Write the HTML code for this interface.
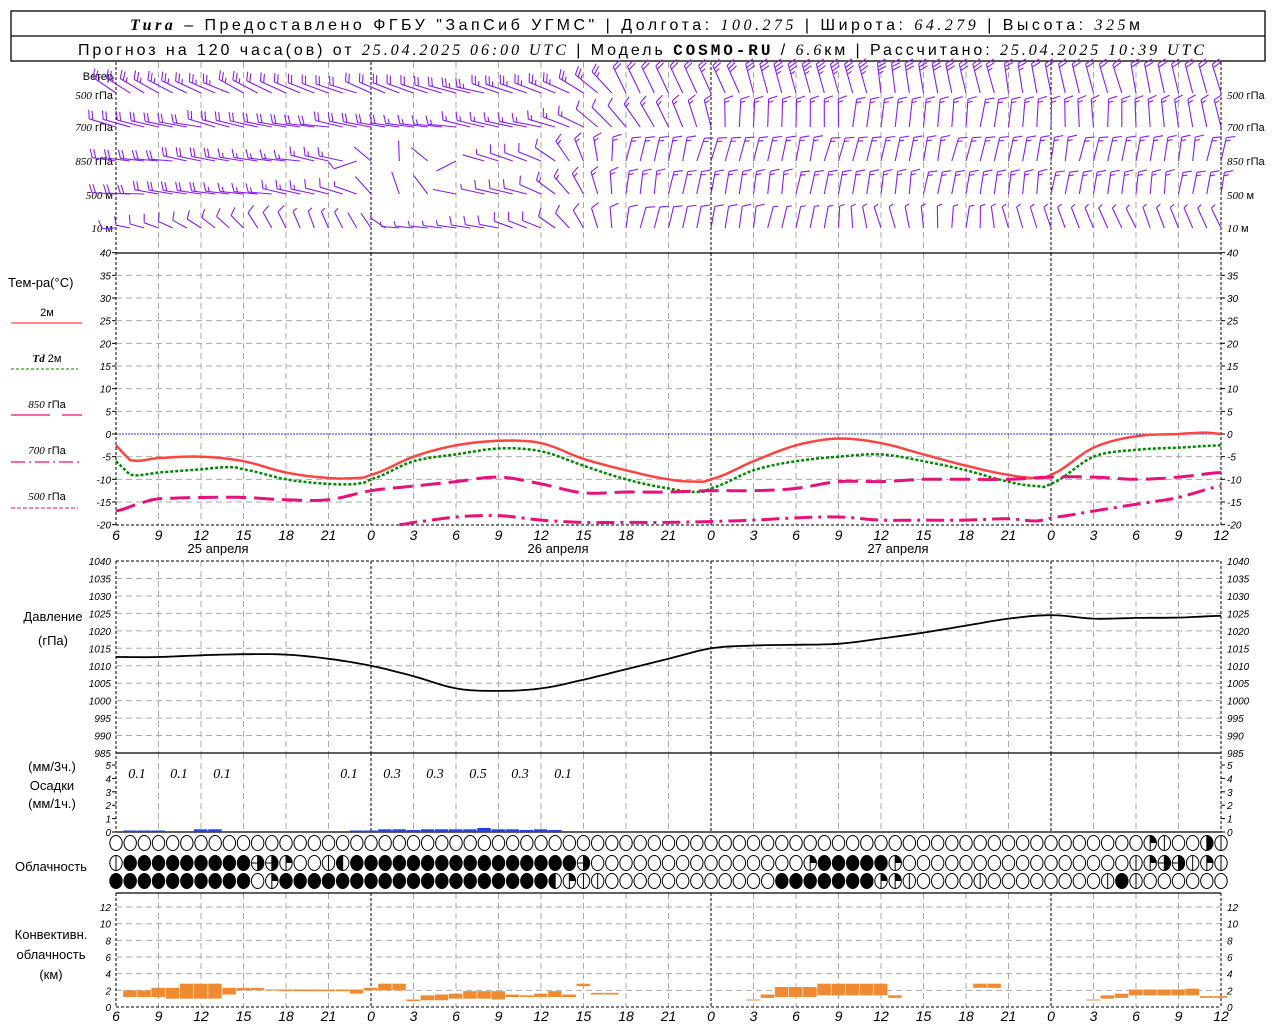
<!DOCTYPE html>
<html><head><meta charset="utf-8"><style>
html,body{margin:0;padding:0;background:#fff;width:1280px;height:1024px;overflow:hidden}
svg{display:block}
.t{font-family:"Liberation Sans","DejaVu Sans",sans-serif;fill:#000}
.i{font-family:"Liberation Serif","DejaVu Serif",serif;font-style:italic;fill:#000}
.ax{font-family:"Liberation Sans",sans-serif;font-style:italic;font-size:10px;fill:#000}
</style></head><body>
<svg id="s" width="1280" height="1024" viewBox="0 0 1280 1024" xmlns="http://www.w3.org/2000/svg">
<rect x="11" y="11" width="1254" height="50" fill="none" stroke="#000" stroke-width="1.3"/>
<line x1="11" y1="36" x2="1265" y2="36" stroke="#000" stroke-width="1.3"/>
<text x="130" y="30" class="t" font-size="16" textLength="1010" lengthAdjust="spacing"><tspan class="i" font-weight="bold">Tura</tspan> – Предоставлено ФГБУ "ЗапСиб УГМС" | Долгота: <tspan class="i">100.275</tspan> | Широта: <tspan class="i">64.279</tspan> | Высота: <tspan class="i">325</tspan>м</text>
<text x="78" y="55" class="t" font-size="16" textLength="1126" lengthAdjust="spacing">Прогноз на 120 часа(ов) от <tspan class="i">25.04.2025 06:00 UTC</tspan>  | Модель <tspan font-family="Liberation Mono" font-weight="bold">COSMO-RU</tspan> / <tspan class="i">6.6</tspan>км | Рассчитано: <tspan class="i">25.04.2025 10:39 UTC</tspan></text>

<g class="t" font-size="11">
<text x="113" y="80" text-anchor="end">Ветер</text>
<text x="113" y="99" text-anchor="end"><tspan class="i">500</tspan> гПа</text>
<text x="113" y="131" text-anchor="end"><tspan class="i">700</tspan> гПа</text>
<text x="113" y="165" text-anchor="end"><tspan class="i">850</tspan> гПа</text>
<text x="113" y="199" text-anchor="end"><tspan class="i">500</tspan> м</text>
<text x="113" y="232" text-anchor="end"><tspan class="i">10</tspan>   м</text>
<text x="1227" y="99"><tspan class="i">500</tspan> гПа</text>
<text x="1227" y="131"><tspan class="i">700</tspan> гПа</text>
<text x="1227" y="165"><tspan class="i">850</tspan> гПа</text>
<text x="1227" y="199"><tspan class="i">500</tspan> м</text>
<text x="1227" y="232"><tspan class="i">10</tspan>   м</text>
</g>
<g class="t" font-size="13">
<text x="8" y="287">Тем-ра(°С)</text>
<text x="47" y="316" text-anchor="middle" font-size="11">2м</text>
<text x="47" y="362" text-anchor="middle" font-size="11"><tspan class="i" font-weight="bold">Td</tspan>  2м</text>
<text x="47" y="408" text-anchor="middle" font-size="11"><tspan class="i">850</tspan> гПа</text>
<text x="47" y="454" text-anchor="middle" font-size="11"><tspan class="i">700</tspan> гПа</text>
<text x="47" y="500" text-anchor="middle" font-size="11"><tspan class="i">500</tspan> гПа</text>
<text x="53" y="621" text-anchor="middle">Давление</text>
<text x="53" y="645" text-anchor="middle">(гПа)</text>
<text x="52" y="771" text-anchor="middle">(мм/3ч.)</text>
<text x="52" y="790" text-anchor="middle">Осадки</text>
<text x="52" y="808" text-anchor="middle">(мм/1ч.)</text>
<text x="51" y="871" text-anchor="middle">Облачность</text>
<text x="51" y="939" text-anchor="middle">Конвективн.</text>
<text x="51" y="959" text-anchor="middle">облачность</text>
<text x="51" y="979" text-anchor="middle">(км)</text>
<text x="218" y="553" text-anchor="middle">25 апреля</text>
<text x="558" y="553" text-anchor="middle">26 апреля</text>
<text x="898" y="553" text-anchor="middle">27 апреля</text>
</g>
<line x1="11" y1="323" x2="82" y2="323" stroke="#f44" stroke-width="1.2"/>
<line x1="11" y1="369" x2="78" y2="369" stroke="#080" stroke-width="1" stroke-dasharray="3,2"/>
<line x1="11" y1="415" x2="50" y2="415" stroke="#e8107a" stroke-width="1.2"/>
<line x1="62" y1="415" x2="82" y2="415" stroke="#e8107a" stroke-width="1.2"/>
<line x1="11" y1="462" x2="82" y2="462" stroke="#e8107a" stroke-width="1.2" stroke-dasharray="14,4,2,4"/>
<line x1="11" y1="508" x2="78" y2="508" stroke="#e8107a" stroke-width="1" stroke-dasharray="4,2"/>
<g class="i" font-size="14">
<text x="137" y="778" text-anchor="middle">0.1</text><text x="179" y="778" text-anchor="middle">0.1</text><text x="222" y="778" text-anchor="middle">0.1</text>
<text x="349" y="778" text-anchor="middle">0.1</text><text x="392" y="778" text-anchor="middle">0.3</text><text x="435" y="778" text-anchor="middle">0.3</text>
<text x="478" y="778" text-anchor="middle">0.5</text><text x="520" y="778" text-anchor="middle">0.3</text><text x="563" y="778" text-anchor="middle">0.1</text>
</g>
<g id="ax" class="ax"></g>
<g id="g"></g>
</svg>
<script>
var NS="http://www.w3.org/2000/svg",G=document.getElementById('g'),AX=document.getElementById('ax');
function el(t,a,p){var e=document.createElementNS(NS,t);for(var k in a)e.setAttribute(k,a[k]);(p||G).appendChild(e);return e;}
function X(h){return 116+h*14.1667;}
function ln(x1,y1,x2,y2,c,w,d){var a={x1:x1,y1:y1,x2:x2,y2:y2,stroke:c,'stroke-width':w||1};if(d)a['stroke-dasharray']=d;return el('line',a);}
function txt(x,y,s,anc,cls,fs){var t=el('text',{x:x,y:y,'text-anchor':anc||'start'},AX);if(cls)t.setAttribute('class',cls);if(fs)t.setAttribute('style','font-size:'+fs+'px');t.textContent=s;}
var panels=[[62,253],[253,525],[561,753],[753,832],[893,1007]];
panels.forEach(function(p){for(var h=3;h<78;h+=3){var day=((6+h)%24)==0;ln(X(h),p[0],X(h),p[1],day?'#000':'#aaa',1,day?'3,2':'6,4');}});
for(var v=-20;v<=40;v+=5){var y=434-v*4.533;if(v>-20&&v<40&&v!=0)ln(116,y,1221,y,'#aaa',1,'6,4');txt(111,y+4,String(v),'end');txt(1227,y+4,String(v));ln(112,y,116,y,'#000');ln(1221,y,1225,y,'#000');}
ln(116,434,1221,434,'#33f',1,'2,1');
ln(116,253,1221,253,'#000',1.3);ln(116,525,1221,525,'#000',1,'3,2');
for(var p=985;p<=1040;p+=5){var y=753-(p-985)*3.49;if(p>985)ln(116,y,1221,y,p==1040?'#000':'#aaa',1,p==1040?'3,2':'6,4');txt(111,y+4,String(p),'end');txt(1227,y+4,String(p));}
ln(116,753,1221,753,'#000',1.3);
for(var k=0;k<=5;k++){var y=832-k*13.4;txt(111,y+4,String(k),'end');txt(1227,y+4,String(k));ln(112,y,116,y,'#000');ln(1221,y,1225,y,'#000');}
ln(116,832,1221,832,'#000',1.3);
for(var k=0;k<=12;k+=2){var y=1007-k*8.33;if(k>0)ln(116,y,1221,y,'#aaa',1,'6,4');txt(111,y+4,String(k),'end');txt(1227,y+4,String(k));}
ln(116,893,1221,893,'#000',1.3);ln(116,1007,1221,1007,'#000',1,'3,2');
[[62,525],[561,832],[893,1007]].forEach(function(p){ln(116,p[0],116,p[1],'#000',1,'3,2');ln(1221,p[0],1221,p[1],'#000',1,'3,2');});
for(var h=0;h<=78;h+=3){var s=String((6+h)%24);txt(X(h),540,s,'middle','ax','14');txt(X(h),1021,s,'middle','ax','14');}
function curve(pts,f,c,w,d){var s='';var a=[];for(var i=0;i<pts.length;i+=2)a.push([pts[i],pts[i+1]]);
 for(var i=0;i<a.length;i++)s+=(i?'L':'M')+X(a[i][0]).toFixed(1)+','+f(a[i][1]).toFixed(1);
 var o={d:s,fill:'none',stroke:c,'stroke-width':w,'stroke-linejoin':'round'};if(d)o['stroke-dasharray']=d;el('path',o);}
function smooth(pts){var a=[];for(var i=0;i<pts.length;i+=2)a.push([pts[i],pts[i+1]]);var r=[];
 for(var h=a[0][0];h<=a[a.length-1][0];h+=0.5){for(var j=0;j<a.length-1&&a[j+1][0]<h;j++);var p0=a[Math.max(j-1,0)],p1=a[j],p2=a[Math.min(j+1,a.length-1)],p3=a[Math.min(j+2,a.length-1)];
 var t=(p2[0]==p1[0])?0:(h-p1[0])/(p2[0]-p1[0]);var m1=(p2[1]-p0[1])/2,m2=(p3[1]-p1[1])/2;var t2=t*t,t3=t2*t;
 var v=(2*t3-3*t2+1)*p1[1]+(t3-2*t2+t)*m1+(-2*t3+3*t2)*p2[1]+(t3-t2)*m2;r.push(h,v);}return r;}
var TY=function(t){return 434-t*4.533;};
curve(smooth([0,-2.5,1,-5.8,3,-5.3,6,-5,9,-6,12,-8.5,15,-9.7,17,-9.7,18,-9,21,-5,24,-2.5,27,-1.5,30,-2,33,-5.5,36,-8,39,-10,41,-10.5,42,-10,45,-6,48,-2.5,51,-1,54,-2,57,-4.5,60,-7,63,-9,65,-9.7,66,-9,69,-3,72,-0.5,75,0,77,0.3,78,0]),TY,'#f44',2.5);
curve(smooth([0,-6,1,-9,3,-8.5,6,-7.8,8,-7.3,9,-7.8,12,-10,15,-11,17,-11,18,-10,21,-6,24,-4.5,27,-3.2,30,-3.8,33,-7,36,-10,39,-12,41,-12.8,42,-12,45,-8,48,-6,51,-5,54,-4.5,57,-6,60,-8,63,-10.5,65,-11.5,66,-11,69,-5,72,-3.5,75,-3,78,-2.5]),TY,'#080',2.5,'3,2');
curve(smooth([0,-17,2,-15,3,-14.3,6,-14,9,-14,12,-14.5,15,-14.5,18,-12.5,21,-11.5,24,-10.5,27,-9.5,30,-11,33,-13,36,-12.8,39,-12.8,42,-12.5,45,-12.5,48,-12,51,-10.5,54,-10.5,57,-10,60,-10,63,-10,66,-9.5,69,-9.5,72,-10,75,-9.5,78,-8.5]),TY,'#e8107a',3,'20,8');
curve(smooth([20,-20,21,-19.5,24,-18.3,27,-18,30,-19,33,-19.5,36,-19.5,39,-19.5,42,-19.3,45,-19,48,-18.5,51,-18.3,54,-19,57,-19,60,-19,63,-18.7,65,-19.2,66,-18.5,69,-17,72,-15.5,75,-14,78,-11.5]),TY,'#e8107a',3,'18,6,3,6');
curve(smooth([0,1012.5,3,1012.5,6,1013,9,1013.3,12,1013.2,15,1012,18,1010,21,1007,24,1003.5,27,1002.8,30,1003.5,33,1006,36,1009,39,1012,42,1015,45,1015.8,48,1016,51,1016.3,54,1017.8,57,1019.5,60,1021.5,63,1023.5,66,1024.5,69,1023.5,72,1023.7,75,1023.8,78,1024.3]),function(p){return 753-(p-985)*3.49;},'#000',1.8);
var pr={1:.05,2:.05,3:.05,6:.2,7:.2,17:.05,18:.05,19:.2,20:.2,21:.15,22:.2,23:.2,24:.2,25:.2,26:.3,27:.2,28:.2,29:.15,30:.2,31:.15};
for(var h in pr){var hh=+h,ht=Math.max(1.5,pr[h]*13.4);el('rect',{x:X(hh)-7,y:832-ht,width:13.5,height:ht,fill:'#2040e0'});}
var cv=[[1,1.2,2],[2,1.2,2],[3,1.2,2.3],[4,1,2.3],[5,1,2.8],[6,1,2.8],[7,1,2.8],[8,1.5,2.3],[9,2,2.3],[10,2,2.3],[11,2,2.1],[12,1.9,2.1],[13,1.9,2.1],[14,1.9,2.1],[15,1.9,2.1],[16,1.9,2.1],[17,1.6,2.1],[18,2,2.3],[19,2,2.8],[20,2,2.8],[21,0.7,0.9],[22,0.8,1.4],[23,0.8,1.5],[24,1,1.6],[25,1,1.9],[26,1,1.9],[27,0.9,1.9],[28,1.2,1.5],[29,1.2,1.4],[30,1.2,1.6],[31,1.2,1.9],[32,1.2,1.5],[33,2.5,2.8],[34,1.5,1.7],[35,1.5,1.7],[45,0.8,0.9],[46,1.1,1.5],[47,1.2,2.4],[48,1.2,2.4],[49,1.2,2.4],[50,1.4,2.8],[51,1.4,2.8],[52,1.4,2.8],[53,1.4,2.8],[54,1.4,2.8],[55,1.1,1.4],[61,2.3,2.8],[62,2.3,2.8],[69,0.8,0.9],[70,1,1.4],[71,1.1,1.6],[72,1.4,2.1],[73,1.4,2.1],[74,1.4,2.1],[75,1.4,2.1],[76,1.4,2.2],[77,1.1,1.3],[78,1.1,1.3]];
cv.forEach(function(b){var y1=1007-b[2]*8.33,y2=1007-b[1]*8.33;el('rect',{x:X(b[0])-7,y:y1,width:13.5,height:Math.max(1,y2-y1),fill:'#f08a30'});});
var R1='O'.repeat(73)+'QVOORV';
var R2='V'+'F'.repeat(9)+'XXQOOVL'+'F'.repeat(16)+'X'+'O'.repeat(15)+'QFFFFFQ'+'O'.repeat(16)+'VQXXVQV';
var R3='F'.repeat(10)+'OQ'+'F'.repeat(19)+'LQVV'+'O'.repeat(12)+'FFFFFFFQQV'+'OOOO'+'V'+'O'.repeat(8)+'VFV'+'O'.repeat(6);
[[R1,843],[R2,863],[R3,881]].forEach(function(r){for(var h=0;h<=78;h++){var c=r[0][h]||'O',x=X(h),y=r[1];
 el('ellipse',{cx:x,cy:y,rx:6.2,ry:7.5,fill:c=='F'?'#000':'#fff',stroke:'#000','stroke-width':1});
 if(c=='V'||c=='Q'||c=='X'||c=='L'||c=='R')ln(x,y-7.5,x,y+7.5,'#000',1);
 if(c=='Q')el('path',{d:'M'+x+','+y+'L'+x+','+(y-7.5)+'A6.2,7.5 0 0 1 '+(x+6.2)+','+y+'Z',fill:'#000'});
 if(c=='L')el('path',{d:'M'+x+','+(y-7.5)+'A6.2,7.5 0 0 0 '+x+','+(y+7.5)+'Z',fill:'#000'});
 if(c=='R'||c=='X')el('path',{d:'M'+x+','+(y-7.5)+'A6.2,7.5 0 0 1 '+x+','+(y+7.5)+'Z',fill:'#000'});
 if(c=='X')ln(x-6,y,x,y,'#000',1);}});
function ip(k,h){for(var j=0;j<k.length-2&&k[j+2]<=h;j+=2);if(j+2>=k.length)return k[k.length-1];var t=(h-k[j])/(k[j+2]-k[j]);t=Math.max(0,Math.min(1,t));return k[j+1]+t*(k[j+3]-k[j+1]);}
var rows=[
 {y:93,L:[0,28,30,28,40,30,78,30],A:[0,150,28,165,32,155,36,120,44,110,55,100,78,105],N:[0,2.5,20,2,30,2.5,40,2,48,3.5,60,3,66,2,78,2]},
 {y:127,L:[0,28,78,28],A:[0,165,20,172,30,168,33,150,38,120,44,90,60,82,78,100],N:[0,2,18,2,22,1.5,32,1.5,34,1,40,1.5,50,1.5,78,1.5]},
 {y:161,L:[0,24,17,24,19,20,24,22,30,24,78,24],A:[0,172,16,170,17,200,19,80,21,100,24,210,26,165,30,155,36,75,78,80],N:[0,2,16,1.5,18,0,26,0,28,1,36,1.5,78,1.5]},
 {y:194,L:[0,24,78,22],A:[0,175,14,170,17,160,19,100,21,110,24,170,30,160,36,80,78,82],N:[0,2,14,1.5,18,0,24,0,27,1,35,1.5,78,1.5]},
 {y:228,L:[0,14,10,18,20,18,30,20,40,22,78,22],A:[0,178,8,135,14,110,18,120,20,178,30,160,36,78,50,80,55,110,60,80,64,110,78,115],N:[0,1,6,1,10,1,18,0,20,0.5,30,1,40,1,50,0.5,60,0.5,78,0.5]}];
rows.forEach(function(r,ri){for(var h=0;h<=78;h++){var x=X(h),y=r.y,a=ip(r.A,h)+((h*37+ri*11)%9-4),L=ip(r.L,h),n=Math.round(ip(r.N,h)*2)/2;
 if(h>18&&h<26&&ri>=2&&ri<=3&&h%2==1)continue;
 var ar=a*Math.PI/180,dx=Math.cos(ar),dy=-Math.sin(ar),tx=x+dx*L,ty=y+dy*L;
 var s='M'+x.toFixed(1)+','+y.toFixed(1)+'L'+tx.toFixed(1)+','+ty.toFixed(1);
 var br=(a-70)*Math.PI/180,bx=Math.cos(br),by=-Math.sin(br);
 var full=Math.floor(n),half=n-full>0;
 for(var k=0;k<full;k++){var px=tx-dx*k*3.5,py=ty-dy*k*3.5;s+='M'+px.toFixed(1)+','+py.toFixed(1)+'l'+(bx*9).toFixed(1)+','+(by*9).toFixed(1);}
 if(half){var px=tx-dx*full*3.5,py=ty-dy*full*3.5;s+='M'+px.toFixed(1)+','+py.toFixed(1)+'l'+(bx*5).toFixed(1)+','+(by*5).toFixed(1);}
 el('path',{d:s,stroke:'#8a1cf0','stroke-width':1.1,fill:'none'});}});
</script>
</body></html>
